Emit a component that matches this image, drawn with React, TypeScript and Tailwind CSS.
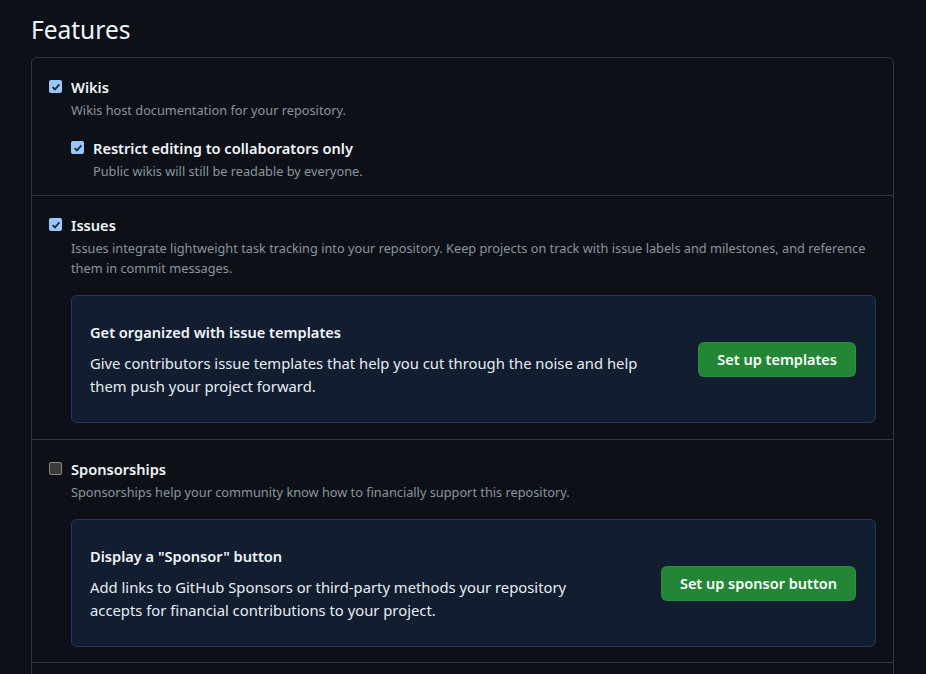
import React from 'react';

const Check = ({ checked }: { checked: boolean }) =>
  checked ? (
    <span className="mt-[3px] flex h-[13px] w-[13px] shrink-0 items-center justify-center rounded-[2px] bg-[#99c8ff]">
      <svg width="10" height="10" viewBox="0 0 10 10">
        <path d="M1.6 5.2 L3.9 7.4 L8.4 2.4" fill="none" stroke="#1f2a38" strokeWidth="1.8" />
      </svg>
    </span>
  ) : (
    <span className="mt-[3px] h-[13px] w-[13px] shrink-0 rounded-[2px] border border-[#858585] bg-[#3b3b3b]" />
  );

const Option = ({
  checked,
  label,
  note,
  children,
}: {
  checked: boolean;
  label: string;
  note: string;
  children?: React.ReactNode;
}) => (
  <div className="flex gap-[9px]">
    <Check checked={checked} />
    <div className="flex-1">
      <div className="text-[14.6px] font-semibold leading-5 text-[#f0f6fc]">{label}</div>
      <p className="mt-[3px] text-[12.75px] leading-5 text-[#8b949e]">{note}</p>
      {children}
    </div>
  </div>
);

const Promo = ({ title, text, action, textWidth }: { title: string; text: string; action: string; textWidth: string }) => (
  <div className="mt-[17px] flex items-center justify-between rounded-md border border-[#1c3a63] bg-[#121d2f] py-6 pl-[18px] pr-[19px]">
    <div className={textWidth}>
      <h3 className="text-[14.6px] font-semibold leading-6 text-[#f0f6fc]">{title}</h3>
      <p className="mt-2 text-[14.8px] leading-[23px] text-[#e6edf3]">{text}</p>
    </div>
    <button className="rounded-md border border-[#2ea043]/40 bg-[#238636] px-[18px] py-[6px] text-[14.5px] font-semibold leading-[21px] text-white">
      {action}
    </button>
  </div>
);

export default function App() {
  return (
    <div
      className="min-h-screen bg-[#0d1117] pl-[31px] pr-[32px] pt-[13px]"
      style={{ fontFamily: '"Noto Sans", "Open Sans", sans-serif' }}
    >
      <h2 className="text-[24.5px] font-normal leading-[34px] text-[#f0f6fc]">Features</h2>
      <div className="mt-[10px] rounded-md border border-[#30363d]">
        <div className="px-[17px] pb-[14px] pt-[19px]">
          <Option checked label="Wikis" note="Wikis host documentation for your repository.">
            <div className="mt-[18px]">
              <Option
                checked
                label="Restrict editing to collaborators only"
                note="Public wikis will still be readable by everyone."
              />
            </div>
          </Option>
        </div>
        <div className="border-t border-[#30363d] px-[17px] pb-[16px] pt-[19px]">
          <Option
            checked
            label="Issues"
            note="Issues integrate lightweight task tracking into your repository. Keep projects on track with issue labels and milestones, and reference them in commit messages."
          >
            <Promo
              title="Get organized with issue templates"
              text="Give contributors issue templates that help you cut through the noise and help them push your project forward."
              action="Set up templates"
              textWidth="w-[570px]"
            />
          </Option>
        </div>
        <div className="border-t border-[#30363d] px-[17px] pb-[15px] pt-[19px]">
          <Option
            checked={false}
            label="Sponsorships"
            note="Sponsorships help your community know how to financially support this repository."
          >
            <Promo
              title={'Display a "Sponsor" button'}
              text="Add links to GitHub Sponsors or third-party methods your repository accepts for financial contributions to your project."
              action="Set up sponsor button"
              textWidth="w-[500px]"
            />
          </Option>
        </div>
        <div className="h-[20px] border-t border-[#30363d]" />
      </div>
    </div>
  );
}
